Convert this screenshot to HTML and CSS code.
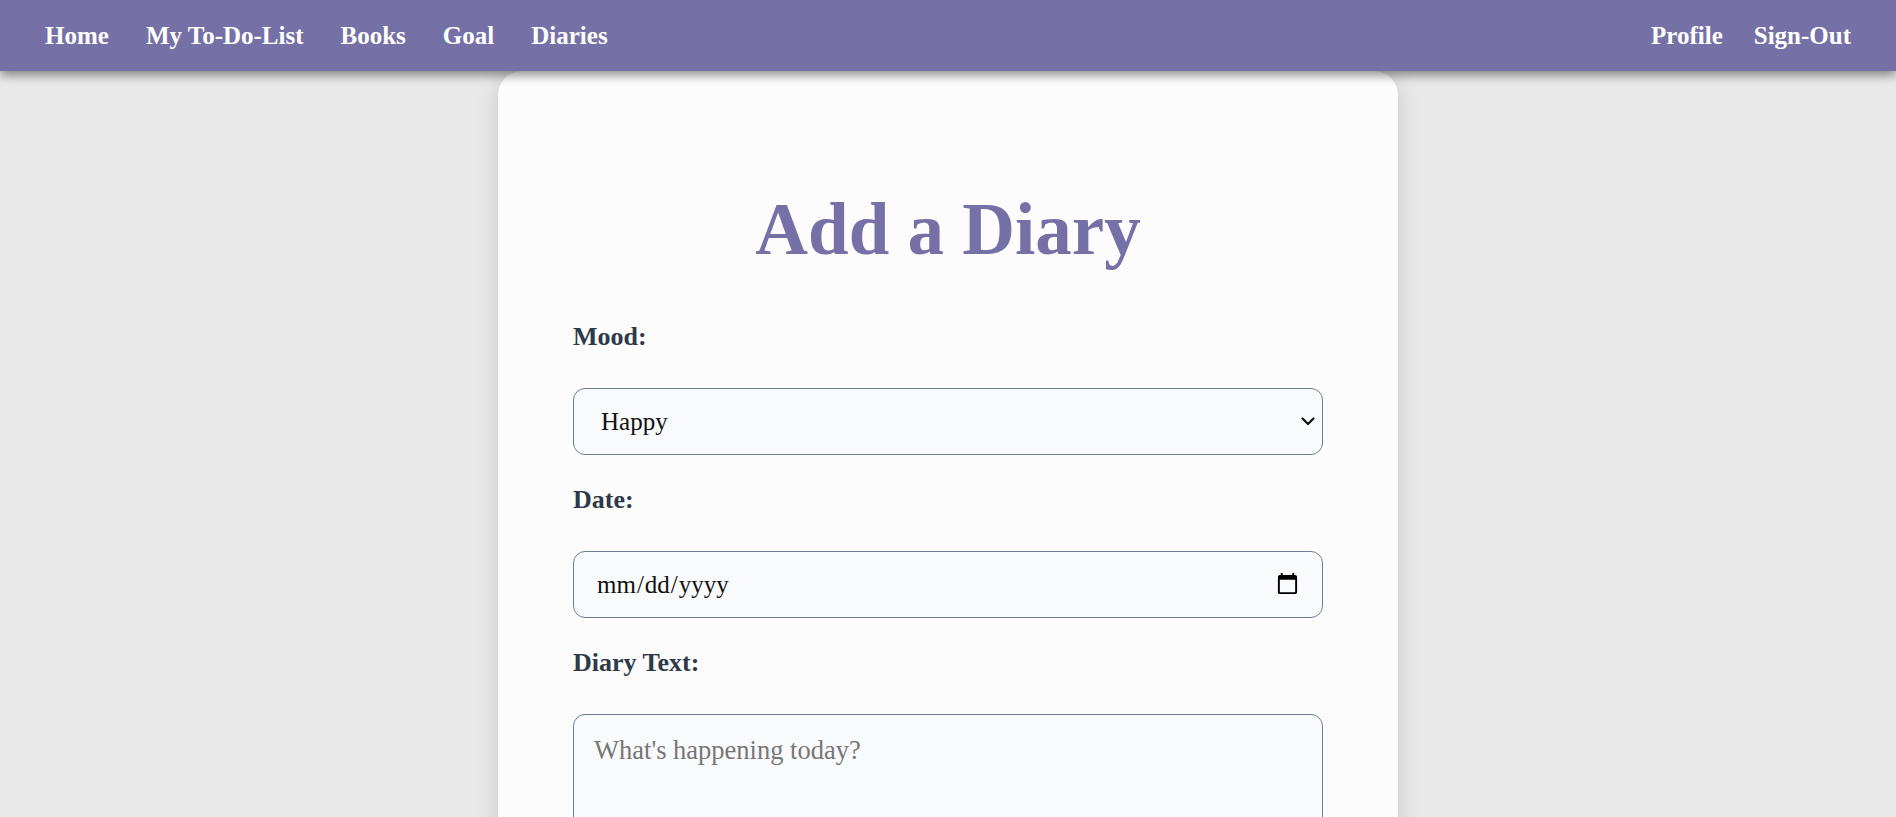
FILE: index.html
```html
<!DOCTYPE html>
<html lang="en">
<head>
<meta charset="utf-8">
<title>Add a Diary</title>
<link rel="stylesheet" href="styles.css">
</head>
<body>
<nav class="topnav">
  <div class="nav-group nav-left">
    <a class="nav-link" href="#">Home</a>
    <a class="nav-link" href="#">My To-Do-List</a>
    <a class="nav-link" href="#">Books</a>
    <a class="nav-link" href="#">Goal</a>
    <a class="nav-link" href="#">Diaries</a>
  </div>
  <div class="nav-group nav-right">
    <a class="nav-link" href="#">Profile</a>
    <a class="nav-link" href="#">Sign-Out</a>
  </div>
</nav>
<main class="page">
  <section class="card">
    <h1 class="title">Add a Diary</h1>
    <form class="diary-form">
      <label class="field-label" for="mood">Mood:</label>
      <div class="select-wrap">
        <select class="field field-select" id="mood">
          <option>Happy</option>
          <option>Sad</option>
          <option>Calm</option>
          <option>Angry</option>
        </select>
        <svg class="select-arrow" width="14" height="9" viewBox="0 0 14 9" aria-hidden="true">
          <path d="M1.5 1.5 L7 7 L12.5 1.5" fill="none" stroke="#111111" stroke-width="2.2" stroke-linecap="round" stroke-linejoin="round"/>
        </svg>
      </div>
      <label class="field-label" for="date">Date:</label>
      <input class="field field-date" id="date" type="date">
      <label class="field-label" for="text">Diary Text:</label>
      <textarea class="field field-text" id="text" placeholder="What's happening today?"></textarea>
    </form>
  </section>
</main>
</body>
</html>
```

FILE: styles.css
```css
html, body {
  margin: 0;
  padding: 0;
}
body {
  background: #e9e9e9;
  font-family: "Liberation Serif", "Times New Roman", serif;
  min-height: 100vh;
}
.topnav {
  position: relative;
  z-index: 2;
  height: 71px;
  background: #7571a7;
  box-shadow: 0 4px 10px rgba(0, 0, 0, 0.45);
  display: flex;
  align-items: center;
  justify-content: space-between;
  padding: 0 45px;
}
.nav-group {
  display: flex;
  align-items: center;
}
.nav-left {
  gap: 37px;
}
.nav-right {
  gap: 31px;
}
.nav-link {
  color: #ffffff;
  text-decoration: none;
  font-family: "Liberation Serif", "Times New Roman", serif;
  font-weight: 700;
  font-size: 25px;
  line-height: 29px;
}
.page {
  display: flex;
  justify-content: center;
}
.card {
  position: relative;
  z-index: 1;
  width: 900px;
  box-sizing: border-box;
  background: #fcfcfc;
  border-radius: 24px;
  box-shadow: 0 4px 22px rgba(0, 0, 0, 0.15);
  padding: 116px 75px 60px;
}
.title {
  margin: 0 0 50px;
  text-align: center;
  color: #7571a7;
  font-family: "Liberation Serif", "Times New Roman", serif;
  font-weight: 700;
  font-size: 73px;
  line-height: 85px;
}
.diary-form {
  display: flex;
  flex-direction: column;
}
.field-label {
  display: block;
  margin-bottom: 36px;
  color: #2f3a48;
  font-family: "Liberation Serif", "Times New Roman", serif;
  font-weight: 700;
  font-size: 26px;
  line-height: 30px;
}
.field {
  box-sizing: border-box;
  width: 100%;
  margin: 0 0 30px;
  border: 1px solid #6f7d92;
  border-radius: 12px;
  background: #f9fafb;
  color: #111111;
  font-family: "Liberation Serif", "Times New Roman", serif;
  font-size: 25px;
}
.select-wrap {
  position: relative;
}
.field-select {
  display: block;
  height: 67px;
  padding: 0 40px 0 27px;
  appearance: none;
  -webkit-appearance: none;
}
.select-arrow {
  position: absolute;
  right: 8px;
  top: 29px;
  pointer-events: none;
}
.field-date {
  height: 67px;
  padding: 0 20px 0 22px;
}
.field-text {
  height: 220px;
  padding: 20px 20px 16px;
  font-size: 26.5px;
  resize: vertical;
}
.field-text::placeholder {
  color: #777777;
}
```
